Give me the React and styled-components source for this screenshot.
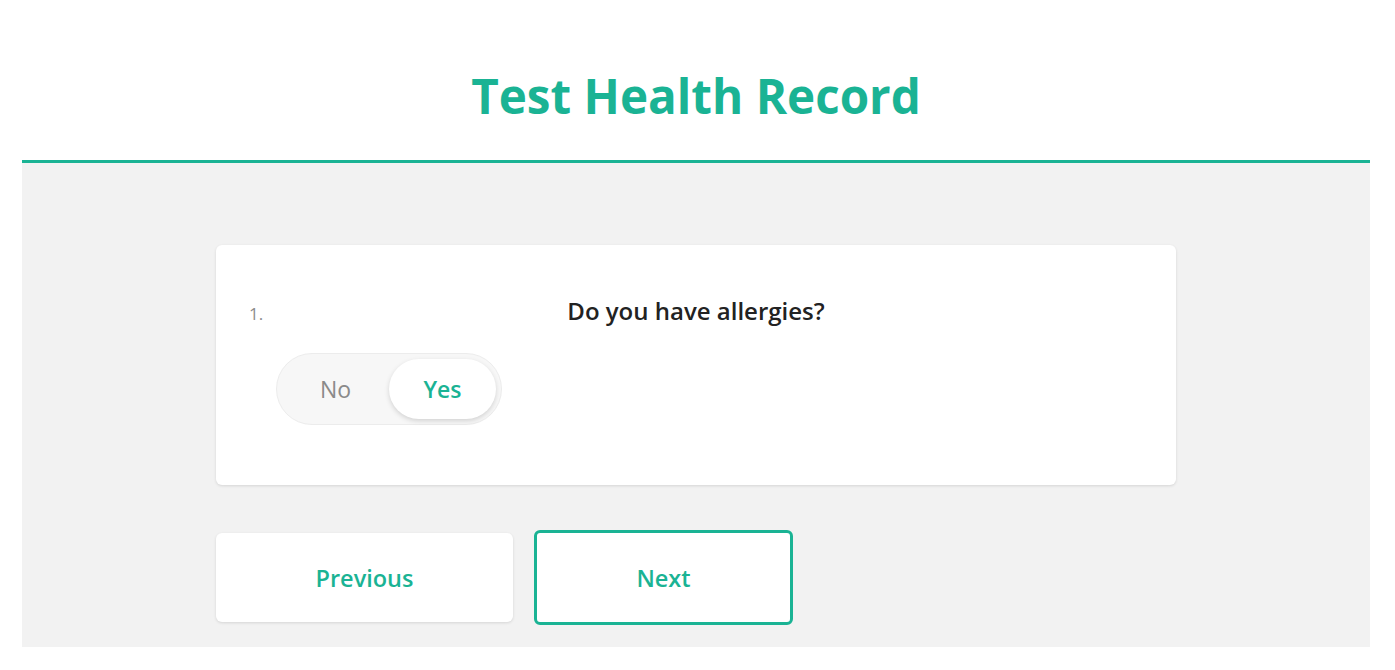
import { useState } from "react";
import styled, { createGlobalStyle } from "styled-components";

const green = "#1ab394";

const GlobalStyle = createGlobalStyle`
  html, body {
    margin: 0;
    padding: 0;
    background: #fff;
    font-family: "Open Sans", "Noto Sans", sans-serif;
  }
`;

const Page = styled.div`
  padding: 0 25px 0 22px;
`;

const Header = styled.header`
  height: 160px;
  border-bottom: 3px solid ${green};
  display: flex;
  justify-content: center;
  align-items: flex-start;
`;

const Title = styled.h1`
  margin: 63px 0 0;
  font-size: 47.6px;
  line-height: 66px;
  font-weight: 700;
  color: ${green};
`;

const Main = styled.main`
  background: #f2f2f2;
  padding: 82px 0 22px;
`;

const Inner = styled.div`
  width: 960px;
  margin: 0 auto;
`;

const Card = styled.section`
  box-sizing: border-box;
  height: 240px;
  background: #fff;
  border-radius: 6px;
  box-shadow: 0 1px 3px rgba(0, 0, 0, 0.12);
  padding: 50px 33px;
`;

const QuestionRow = styled.div`
  display: grid;
  grid-template-columns: 1fr auto 1fr;
  align-items: baseline;
`;

const Number = styled.span`
  font-size: 17px;
  color: #8c8c8c;
`;

const Question = styled.h2`
  margin: 0;
  font-size: 24px;
  line-height: 32px;
  font-weight: 600;
  color: #222;
`;

const Toggle = styled.div`
  box-sizing: border-box;
  margin: 26px 0 0 27px;
  width: 226px;
  height: 72px;
  padding: 5px;
  border-radius: 36px;
  background: #f7f7f7;
  border: 1px solid #ececec;
  display: grid;
  grid-template-columns: 1fr 1fr;
`;

const Option = styled.button`
  border: none;
  border-radius: 30px;
  font-family: inherit;
  font-size: 23px;
  cursor: pointer;
  background: ${(p) => (p.$active ? "#fff" : "transparent")};
  color: ${(p) => (p.$active ? green : "#8a8a8a")};
  font-weight: ${(p) => (p.$active ? 600 : 400)};
  box-shadow: ${(p) => (p.$active ? "0 2px 5px rgba(0,0,0,0.15)" : "none")};
`;

const Actions = styled.div`
  display: flex;
  align-items: center;
  gap: 21px;
  margin-top: 45px;
`;

const NavButton = styled.button`
  box-sizing: border-box;
  width: ${(p) => (p.$primary ? "259px" : "297px")};
  height: ${(p) => (p.$primary ? "95px" : "89px")};
  background: #fff;
  border: ${(p) => (p.$primary ? `3px solid ${green}` : "none")};
  border-radius: 6px;
  box-shadow: ${(p) => (p.$primary ? "none" : "0 1px 3px rgba(0,0,0,0.12)")};
  color: ${green};
  font-family: inherit;
  font-size: 23.5px;
  font-weight: 600;
  cursor: pointer;
`;

export default function App() {
  const [answer, setAnswer] = useState("yes");

  return (
    <Page>
      <GlobalStyle />
      <Header>
        <Title>Test Health Record</Title>
      </Header>
      <Main>
        <Inner>
          <Card>
            <QuestionRow>
              <Number>1.</Number>
              <Question>Do you have allergies?</Question>
              <span />
            </QuestionRow>
            <Toggle>
              <Option $active={answer === "no"} onClick={() => setAnswer("no")}>
                No
              </Option>
              <Option $active={answer === "yes"} onClick={() => setAnswer("yes")}>
                Yes
              </Option>
            </Toggle>
          </Card>
          <Actions>
            <NavButton>Previous</NavButton>
            <NavButton $primary>Next</NavButton>
          </Actions>
        </Inner>
      </Main>
    </Page>
  );
}
